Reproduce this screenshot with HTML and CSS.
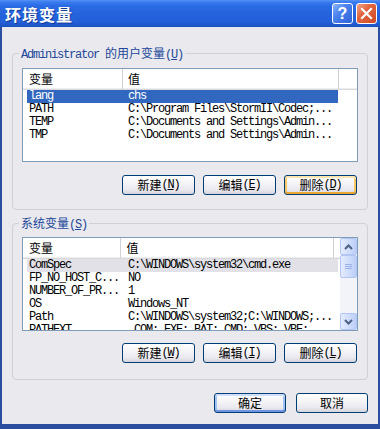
FILE: index.html
```html
<!DOCTYPE html>
<html lang="zh-CN">
<head>
<meta charset="utf-8">
<title>环境变量</title>
<link rel="stylesheet" href="styles.css">
</head>
<body>
<div class="window">
  <div class="titlebar">
    <span class="title">环境变量</span>
    <div class="tbtns">
      <span class="tb help">?</span>
      <span class="tb close"><svg width="19" height="19" viewBox="0 0 19 19"><path d="M5 5 L14 14 M14 5 L5 14" stroke="#fff" stroke-width="2.2" stroke-linecap="square" fill="none"/></svg></span>
    </div>
  </div>
  <div class="client">
    <section class="group g1">
      <div class="legend"><span class="lat">Administrator </span>的用户变量<span class="lat">(<u>U</u>)</span></div>
      <div class="list">
        <div class="lv">
          <div class="hdr"><div class="hc hc1">变量</div><div class="hc hc2">值</div><div class="hc hc3"></div></div>
          <div class="row sel"><span class="rc1">lang</span><span class="rc2">chs</span></div>
          <div class="row"><span class="rc1">PATH</span><span class="rc2">C:\Program Files\StormII\Codec;...</span></div>
          <div class="row"><span class="rc1">TEMP</span><span class="rc2">C:\Documents and Settings\Admin...</span></div>
          <div class="row"><span class="rc1">TMP</span><span class="rc2">C:\Documents and Settings\Admin...</span></div>
        </div>
      </div>
      <div class="btns">
        <button class="btn">新建<span class="lat">(<u>N</u>)</span></button>
        <button class="btn">编辑<span class="lat">(<u>E</u>)</span></button>
        <button class="btn hot">删除<span class="lat">(<u>D</u>)</span></button>
      </div>
    </section>
    <section class="group g2">
      <div class="legend">系统变量<span class="lat">(<u>S</u>)</span></div>
      <div class="list">
        <div class="lv">
          <div class="hdr"><div class="hc hc1">变量</div><div class="hc hc2">值</div><div class="hc hc3"></div></div>
          <div class="row inact"><span class="rc1">ComSpec</span><span class="rc2">C:\WINDOWS\system32\cmd.exe</span></div>
          <div class="row"><span class="rc1">FP_NO_HOST_C...</span><span class="rc2">NO</span></div>
          <div class="row"><span class="rc1">NUMBER_OF_PR...</span><span class="rc2">1</span></div>
          <div class="row"><span class="rc1">OS</span><span class="rc2">Windows_NT</span></div>
          <div class="row"><span class="rc1">Path</span><span class="rc2">C:\WINDOWS\system32;C:\WINDOWS;...</span></div>
          <div class="row"><span class="rc1">PATHEXT</span><span class="rc2">.COM;.EXE;.BAT;.CMD;.VBS;.VBE;...</span></div>
        </div>
        <div class="sb">
          <div class="sbb"><svg width="9" height="6" viewBox="0 0 9 6"><path d="M1 5 L4.5 1.5 L8 5" stroke="#4D6185" stroke-width="2" fill="none"/></svg></div>
          <div class="thumb"><svg width="7" height="7" viewBox="0 0 7 7"><path d="M0 1.5 H7 M0 3.5 H7 M0 5.5 H7" stroke="#9AB1EA" stroke-width="1" fill="none"/></svg></div>
          <div class="sbspace"></div>
          <div class="sbb"><svg width="9" height="6" viewBox="0 0 9 6"><path d="M1 1 L4.5 4.5 L8 1" stroke="#4D6185" stroke-width="2" fill="none"/></svg></div>
        </div>
      </div>
      <div class="btns">
        <button class="btn">新建<span class="lat">(<u>W</u>)</span></button>
        <button class="btn">编辑<span class="lat">(<u>I</u>)</span></button>
        <button class="btn">删除<span class="lat">(<u>L</u>)</span></button>
      </div>
    </section>
    <div class="dlgbtns">
      <button class="btn dbtn def">确定</button>
      <button class="btn dbtn">取消</button>
    </div>
  </div>
</div>
</body>
</html>
```
FILE: styles.css
```css
* { box-sizing: border-box; margin: 0; padding: 0; }
html, body { width: 380px; height: 429px; overflow: hidden; background: #2B4E9E; }
body {
  font-family: "Noto Sans CJK SC", "Liberation Sans", sans-serif;
  font-size: 12px;
  color: #000;
}
.window {
  width: 380px;
  height: 429px;
  display: flex;
  flex-direction: column;
  background: #2B4E9E;
}
.titlebar {
  height: 27px;
  flex: none;
  display: flex;
  align-items: center;
  justify-content: space-between;
  padding: 0 3px 0 5px;
  background: linear-gradient(to bottom, #5592F4 0px, #3A7CEF 2px, #2A6BE4 6px, #2563DD 14px, #2360D8 22px, #1C50C2 27px);
}
.title {
  color: #fff;
  font-weight: bold;
  font-size: 16px;
  letter-spacing: 1px;
  line-height: 20px;
  text-shadow: 1px 1px 0 #123A94;
}
.tbtns { display: flex; gap: 3px; }
.tb {
  width: 21px;
  height: 21px;
  border: 1px solid #fff;
  border-radius: 3px;
  display: flex;
  align-items: center;
  justify-content: center;
}
.help {
  background: linear-gradient(135deg, #8AB4F8 0%, #4C82EC 40%, #2C62D8 100%);
  color: #fff;
  font-family: "Liberation Sans", sans-serif;
  font-weight: bold;
  font-size: 16px;
  line-height: 19px;
}
.close {
  background: linear-gradient(135deg, #F0A48A 0%, #E2653F 40%, #CC4A24 100%);
}
.client {
  flex: 1;
  margin: 0 2px 5px;
  background: #EAE9ED;
  padding: 0 10px;
  display: flex;
  flex-direction: column;
}
.group {
  border: 1px solid #D0D0D5;
  border-radius: 4px;
  display: flex;
  flex-direction: column;
}
.g1 { margin-top: 26px; padding-bottom: 14px; }
.g2 { margin-top: 13px; padding-bottom: 16px; }
.legend {
  height: 14px;
  line-height: 14px;
  margin: -8px 0 0 6px;
  padding: 0 2px;
  background: #EAE9ED;
  align-self: flex-start;
  color: #21479A;
  white-space: pre;
}
.lat {
  font-family: "Liberation Mono", monospace;
  letter-spacing: -1.2px;
  white-space: pre;
}
.list {
  margin: 8px 9px 0;
  height: 94px;
  border: 1px solid #7F9DB9;
  background: #fff;
  overflow: hidden;
  display: flex;
}
.g2 .list { margin-top: 7px; }
.lv { flex: 1; min-width: 0; overflow: hidden; }
.hdr {
  display: flex;
  height: 21px;
  border-bottom: 1px solid #D8D7DC;
  box-shadow: inset 0 -1px 0 #EEEEF1;
}
.hc { line-height: 20px; padding-left: 6px; font-size: 12px; }
.hc1 { width: 100px; border-right: 1px solid #D2D2D6; }
.hc2 { width: 216px; padding-left: 5px; border-right: 1px solid #D2D2D6; }
.hc3 { flex: 1; }
.row {
  display: flex;
  height: 13px;
  line-height: 13px;
  margin-left: 4px;
  width: 311px;
  font-family: "Liberation Mono", monospace;
  font-size: 12px;
  letter-spacing: -1.2px;
  white-space: pre;
}
.rc1 { width: 95px; padding-left: 2px; overflow: hidden; }
.rc2 { flex: 1; padding-left: 6px; overflow: hidden; }
.sel { background: #3167BE; color: #fff; }
.inact { background: #E2E1E7; }
.sb {
  width: 17px;
  flex: none;
  display: flex;
  flex-direction: column;
  background: #F3F4FA;
}
.sbb, .thumb {
  height: 17px;
  border: 1px solid #B3C6F1;
  border-radius: 2px;
  background: linear-gradient(to right, #E4ECFD, #CDDBFA 60%, #BCCEF7);
  display: flex;
  align-items: center;
  justify-content: center;
}
.thumb { height: 23px; }
.sbspace { flex: 1; }
.btns {
  display: flex;
  justify-content: flex-end;
  gap: 8px;
  margin-top: 13px;
  padding-right: 10px;
}
.g2 .btns { margin-top: 12px; }
.btn {
  width: 73px;
  height: 20px;
  border: 1px solid #003C74;
  border-radius: 3px;
  background: linear-gradient(to bottom, #FFFFFF 0%, #F6F6F8 35%, #EAE9EF 75%, #D6D5DE 100%);
  font-family: "Noto Sans CJK SC", sans-serif;
  font-size: 12px;
  line-height: 18px;
  color: #000;
  text-align: center;
  display: flex;
  align-items: center;
  justify-content: center;
}
.hot {
  box-shadow: inset 0 2px 0 #FFE6AE, inset 0 -2px 0 #EBA632, inset 2px 0 0 #F9C863, inset -2px 0 0 #F9C863;
}
.dlgbtns {
  display: flex;
  justify-content: flex-end;
  gap: 10px;
  margin-top: 13px;
}
.dbtn { width: 72px; }
.def {
  box-shadow: inset 0 2px 0 #CEE0FB, inset 0 -2px 0 #6E96E4, inset 2px 0 0 #A2C0F2, inset -2px 0 0 #A2C0F2;
}
```
